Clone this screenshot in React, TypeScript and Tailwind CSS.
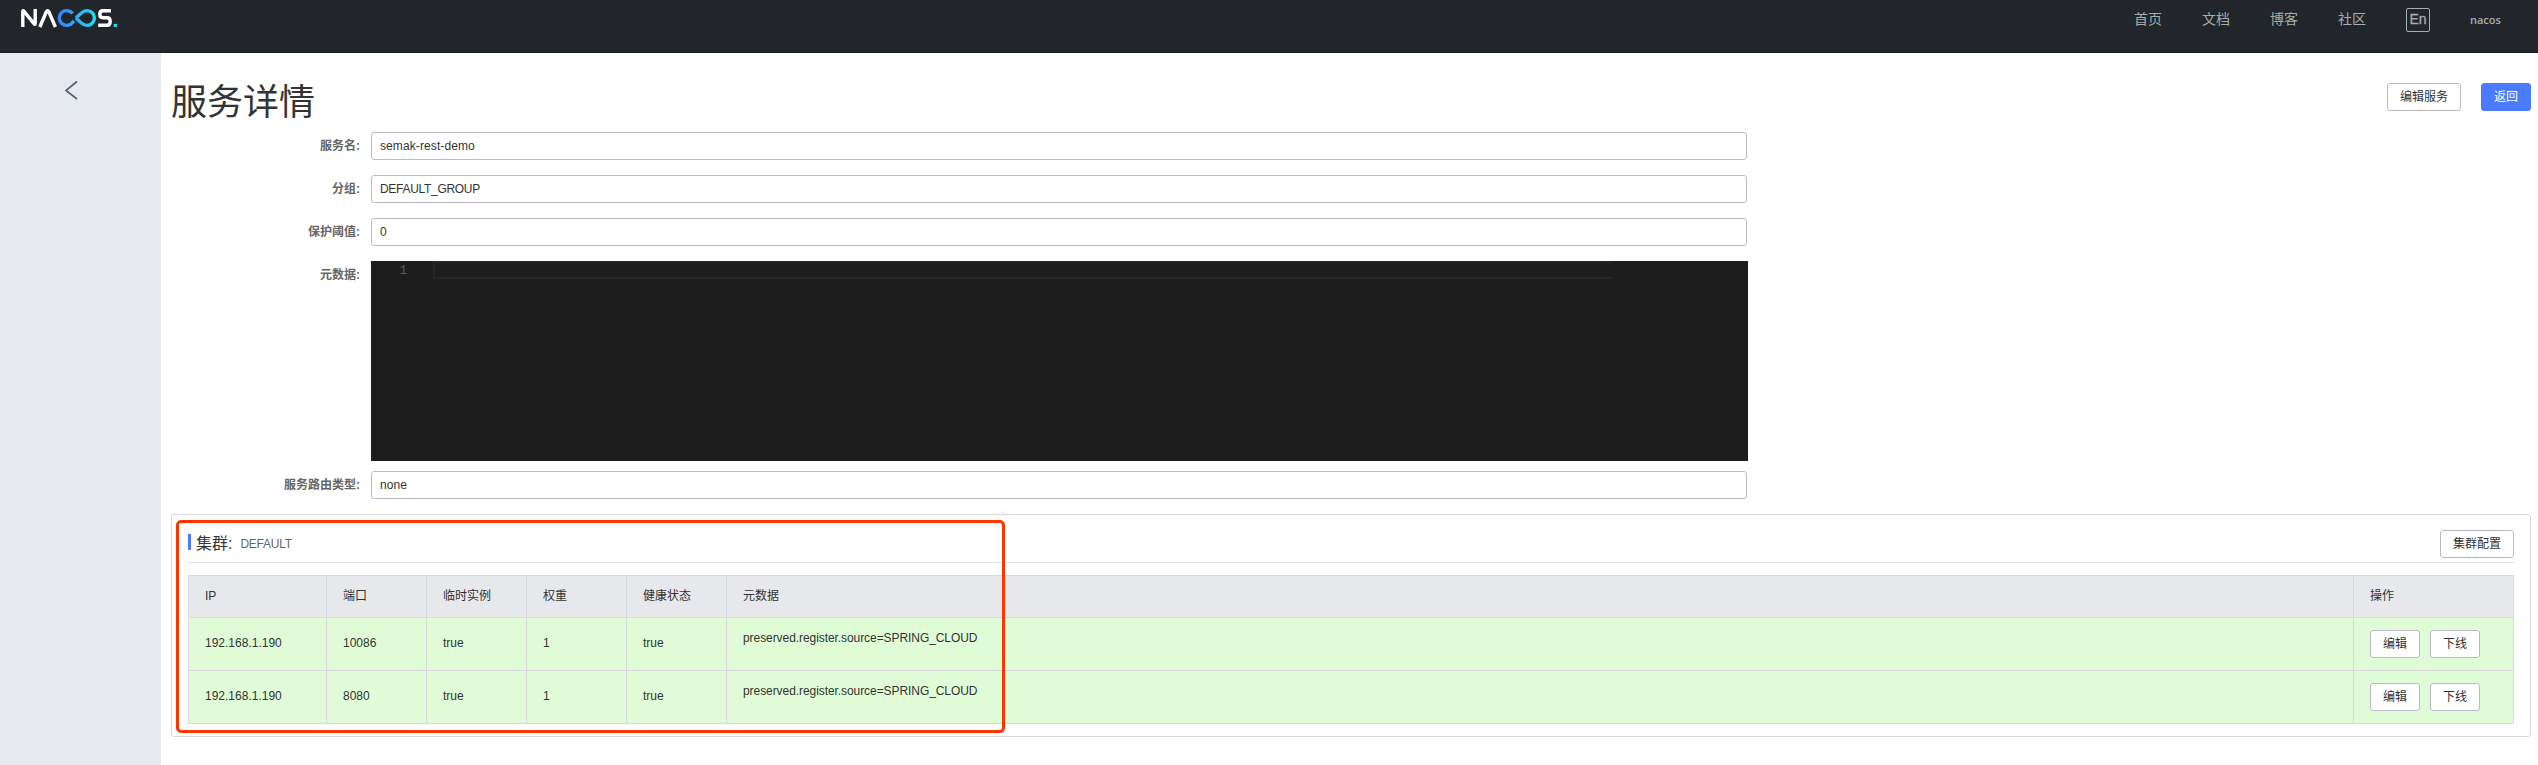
import type { ReactNode } from 'react';

function Logo() {
  return (
    <svg width="98" height="20" viewBox="0 0 98 20" fill="none" strokeWidth="3.4">
      <defs>
        <linearGradient id="loop" x1="37" y1="0" x2="77" y2="0" gradientUnits="userSpaceOnUse">
          <stop offset="0" stopColor="#3a7dfb" />
          <stop offset="1" stopColor="#1de0f5" />
        </linearGradient>
      </defs>
      <path d="M2.8 19V3.6Q2.8 2 4 3.4L14 15.6Q15.2 17 15.2 15.4V1" stroke="#fff" />
      <path d="M19.8 19L26.2 4Q27.6 1.6 29 4L35.4 19" stroke="#fff" />
      <path d="M52.6 5.6A7.4 7.4 0 1 0 52.6 14.4L54 12.8" stroke="url(#loop)" />
      <path d="M55.8 10L61.4 5Q64 2.6 67 2.6A7.4 7.4 0 0 1 67 17.4Q64 17.4 61.4 15L55.8 10" stroke="url(#loop)" />
      <path d="M91 2.7H83Q79.8 2.7 79.8 6.2Q79.8 9.7 83 9.7H87Q90.2 9.7 90.2 13.4Q90.2 17.2 87 17.2H78.2" stroke="#fff" />
      <path d="M93.6 17.4H97" stroke="#1de0f5" strokeWidth="3" />
    </svg>
  );
}

function Btn({ children, primary }: { children: ReactNode; primary?: boolean }) {
  return (
    <button
      className={
        primary
          ? 'h-7 rounded-[3px] border border-[#4a7aff] bg-[#4a7aff] px-3 text-xs leading-[24px] text-white'
          : 'h-7 rounded-[3px] border border-[#bbb9c9] bg-white px-3 text-xs leading-[24px] text-[#333]'
      }
    >
      {children}
    </button>
  );
}

function Field({ label, value, tight }: { label: string; value: string; tight?: boolean }) {
  return (
    <div className="flex h-7 items-center">
      <div className="w-[189px] text-right text-xs font-bold text-[#666]">{label}:</div>
      <div className="ml-[11px] h-7 w-[1376px] rounded-[3px] border border-[#bbb9c9] px-2 text-xs leading-[26px] text-[#333]">
        <span className={tight ? 'tracking-[-0.3px]' : 'tracking-[0.1px]'}>{value}</span>
      </div>
    </div>
  );
}

const rows = [
  { ip: '192.168.1.190', port: '10086' },
  { ip: '192.168.1.190', port: '8080' },
];
const heads = ['IP', '端口', '临时实例', '权重', '健康状态', '元数据', '操作'];
const cell = 'border border-[#d8d8de] px-4 text-left font-normal';

export default function App() {
  return (
    <div className="flex h-[765px] w-[2538px] flex-col overflow-hidden bg-white font-['Liberation_Sans','Noto_Sans_CJK_SC',sans-serif] text-xs text-[#333]">
      <header className="flex h-[53px] shrink-0 items-start justify-between border-b border-[#191c20] bg-[#22262b] pl-5">
        <div className="pt-2">
          <Logo />
        </div>
        <nav className="flex items-start pr-[37px] pt-2 text-sm leading-[22px] text-[#a9abad]">
          <span className="w-[68px]">首页</span>
          <span className="w-[68px]">文档</span>
          <span className="w-[68px]">博客</span>
          <span className="w-[68px]">社区</span>
          <span className="h-6 w-6 rounded-[2px] border border-[#a9abad] text-center text-[14px] leading-[21px] [-webkit-text-stroke:0.3px_#a9abad]">En</span>
          <span className="ml-10 w-[31px] whitespace-nowrap font-['Open_Sans',sans-serif] text-[11px] font-semibold leading-6">nacos</span>
        </nav>
      </header>
      <div className="flex min-h-0 flex-1">
        <aside className="w-[161px] bg-[#e6e9ee] pl-[64px] pt-[27px]">
          <svg width="14" height="20" viewBox="0 0 14 20" fill="none" stroke="#546478" strokeWidth="1.7">
            <path d="M13 1.5L2 10.5L13 19" />
          </svg>
        </aside>
        <main className="relative flex-1 pl-[10px] pr-[7px]">
          <div className="flex h-[79px] items-start justify-between pt-[30px]">
            <h1 className="pt-[2px] text-[36px] leading-[36px] text-[#333]">服务详情</h1>
            <div className="flex gap-5">
              <Btn>编辑服务</Btn>
              <Btn primary>返回</Btn>
            </div>
          </div>
          <div className="flex flex-col gap-[15px]">
            <Field label="服务名" value="semak-rest-demo" />
            <Field label="分组" value="DEFAULT_GROUP" tight />
            <Field label="保护阈值" value="0" />
            <div className="-mb-[5px] flex">
              <div className="w-[189px] text-right text-xs font-bold leading-7 text-[#666]">元数据:</div>
              <div className="ml-[11px] flex h-[200px] w-[1377px] bg-[#1d1d1d]">
                <div className="w-9 pt-px text-right font-['Liberation_Mono',monospace] text-xs leading-[18px] text-[#5a5a5a]">1</div>
                <div className="ml-[26px] h-[18px] w-[1180px] border-2 border-r-0 border-[#262626]" />
              </div>
            </div>
            <Field label="服务路由类型" value="none" />
          </div>
          <section className="mt-[15px] h-[223px] rounded-[3px] border border-[#d8d8de] px-4">
            <div className="flex h-[48px] items-end justify-between border-b border-[#e3e3e8]">
              <div className="flex h-[37px] items-center">
                <span className="-mt-1 h-4 w-[3px] bg-[#4a7aff]" />
                <span className="ml-[5px] text-base leading-4">集群:</span>
                <span className="ml-2 text-xs tracking-[-0.25px] text-[#666]">DEFAULT</span>
              </div>
              <div className="pb-1">
                <Btn>集群配置</Btn>
              </div>
            </div>
            <table className="mt-3 w-[2326px] table-fixed border-collapse">
              <colgroup>
                <col className="w-[138px]" />
                <col className="w-[100px]" />
                <col className="w-[100px]" />
                <col className="w-[100px]" />
                <col className="w-[100px]" />
                <col />
                <col className="w-[160px]" />
              </colgroup>
              <thead>
                <tr className="h-[42px] bg-[#e7e8ec]">
                  {heads.map((h) => (
                    <th key={h} className={cell}>
                      <div className="pb-px">{h}</div>
                    </th>
                  ))}
                </tr>
              </thead>
              <tbody>
                {rows.map((r) => (
                  <tr key={r.port} className="h-[53px] bg-[#e0fcd6]">
                    {[r.ip, r.port, 'true', '1', 'true'].map((v, i) => (
                      <td key={i} className={cell}>
                        <div className="pb-[2px]">{v}</div>
                      </td>
                    ))}
                    <td className={cell}>
                      <p className="mb-3 tracking-[-0.07px]">preserved.register.source=SPRING_CLOUD</p>
                    </td>
                    <td className={cell}>
                      <div className="flex gap-[10px]">
                        <Btn>编辑</Btn>
                        <Btn>下线</Btn>
                      </div>
                    </td>
                  </tr>
                ))}
              </tbody>
            </table>
          </section>
          <div className="absolute left-[15px] top-[467px] h-[213px] w-[829px] rounded-[5px] border-[3px] border-[#ff3500]" />
        </main>
      </div>
    </div>
  );
}
